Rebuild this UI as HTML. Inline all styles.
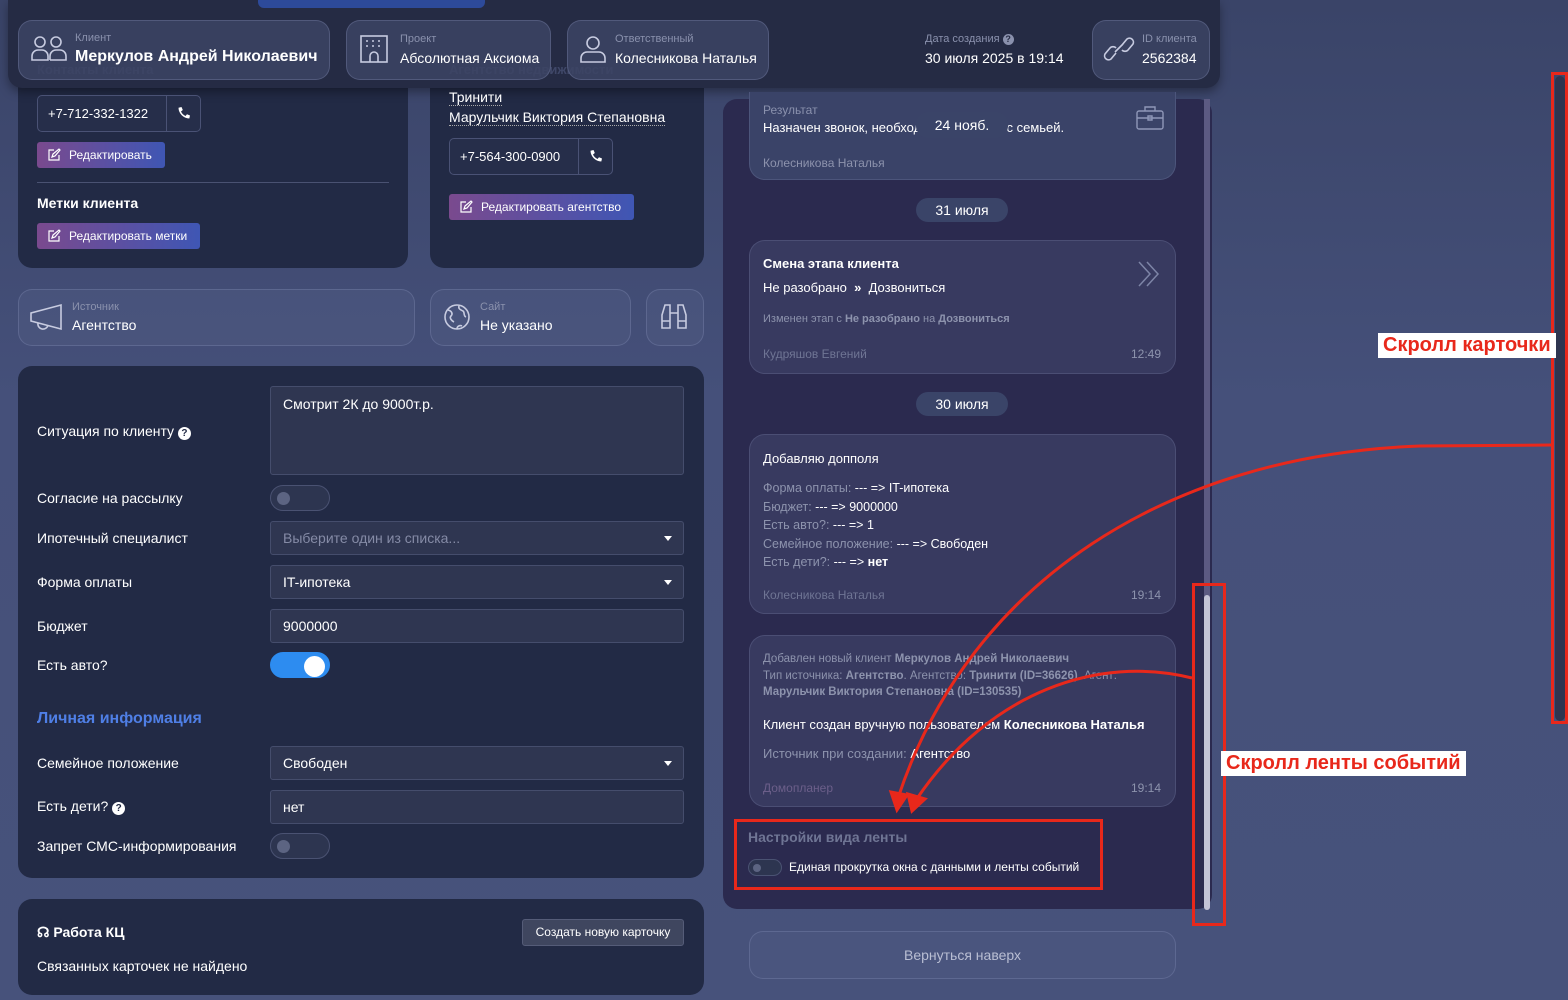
<!DOCTYPE html>
<html><head><meta charset="utf-8">
<style>
*{box-sizing:border-box;margin:0;padding:0}
body{width:1568px;height:1000px;overflow:hidden;position:relative;font-family:"Liberation Sans","Noto Sans CJK SC",sans-serif;color:#fff;background:linear-gradient(180deg,#3a4468 0%,#45507a 40%,#47527b 100%)}
.a{position:absolute}
.card{position:absolute;background:#222a45;border-radius:14px}
.chip{position:absolute;background:rgba(90,100,140,.28);border:1px solid rgba(140,150,190,.3);border-radius:14px}
.lbl{font-size:11px;color:#8a91ad}
.val{font-size:14px;color:#fff}
.btn{position:absolute;height:26px;border-radius:3px;background:linear-gradient(90deg,#7a4a8e,#3f56b4);font-size:12px;color:#fff;line-height:26px;padding-left:32px}
.btn svg{position:absolute;left:10px;top:6px}
.phone{position:absolute;height:37px;border:1px solid #4a5275;border-radius:5px;background:#262e4a;font-size:13px;line-height:35px;padding-left:10px}
.phone .ic{position:absolute;right:0;top:0;width:34px;height:35px;border-left:1px solid #4a5275}
.fl{position:absolute;left:37px;font-size:14px;color:#fff}
.inp{position:absolute;left:270px;width:414px;height:34px;background:#2f3651;border:1px solid #454d6c;border-radius:3px;font-size:14px;line-height:32px;padding-left:12px}
.caret{position:absolute;right:11px;top:14px;border-left:4px solid transparent;border-right:4px solid transparent;border-top:5px solid #fff}
.tog{position:absolute;left:270px;width:60px;height:26px;border-radius:13px;background:#2d3550;border:1px solid #4a5272}
.tog i{position:absolute;left:6px;top:6px;width:13px;height:13px;border-radius:50%;background:#5c6482}
.ev{position:absolute;left:749px;width:427px;background:rgba(80,88,130,.35);border:1px solid rgba(130,140,180,.25);border-radius:16px}
.date{position:absolute;left:916px;width:92px;height:24px;border-radius:12px;background:#3a4468;font-size:14px;text-align:center;line-height:24px}
.g{color:#8d93ad}
.red{position:absolute;border:3px solid #e8281b}
.rl{position:absolute;background:#fff;color:#e8281b;font-weight:bold;font-size:20px;padding:1px 5px}
</style></head><body>

<!-- left cards -->
<div class="card" style="left:18px;top:60px;width:390px;height:208px"></div>
<div class="card" style="left:430px;top:60px;width:274px;height:208px"></div>

<!-- header bar -->
<div class="a" style="left:8px;top:0;width:1212px;height:88px;background:#252b44;border-radius:0 0 14px 14px;box-shadow:0 4px 10px rgba(0,0,0,.35)"></div>
<div class="a" style="left:258px;top:0;width:227px;height:8px;background:#2d4a9a;border-radius:0 0 6px 6px"></div>
<div class="a" style="left:37px;top:62px;font-size:13px;font-weight:bold;color:#3f4768">Контакты клиента</div>
<div class="a" style="left:449px;top:62px;font-size:13px;font-weight:bold;color:#3f4768">Агентство недвижимости</div>

<!-- header chips -->
<div class="chip" style="left:18px;top:20px;width:312px;height:60px;background:rgba(60,68,100,.85)"></div>
<svg class="a" style="left:31px;top:35px" width="36" height="28" viewBox="0 0 36 28" fill="none" stroke="#c7cbe0" stroke-width="1.6"><circle cx="9" cy="7" r="5"/><circle cx="25" cy="7" r="5"/><path d="M1 25v-4a6 6 0 016-6h4a6 6 0 016 6v4zM19 25v-4a6 6 0 016-6h4a6 6 0 016 6v4H19"/></svg>
<div class="a lbl" style="left:75px;top:32px">Клиент</div>
<div class="a" style="left:75px;top:48px;font-size:16px;font-weight:bold">Меркулов Андрей Николаевич</div>

<div class="chip" style="left:346px;top:20px;width:205px;height:60px;background:rgba(60,68,100,.85)"></div>
<svg class="a" style="left:359px;top:34px" width="30" height="30" viewBox="0 0 30 30" fill="none" stroke="#c7cbe0" stroke-width="1.6"><rect x="2" y="2" width="26" height="26"/><path d="M7 7h2M13 7h2M19 7h2M7 12h2M13 12h2M19 12h2M11 28v-6a4 4 0 018 0v6"/></svg>
<div class="a lbl" style="left:400px;top:33px">Проект</div>
<div class="a val" style="left:400px;top:50px">Абсолютная Аксиома</div>

<div class="chip" style="left:567px;top:20px;width:202px;height:60px;background:rgba(60,68,100,.85)"></div>
<svg class="a" style="left:580px;top:34px" width="26" height="30" viewBox="0 0 26 30" fill="none" stroke="#c7cbe0" stroke-width="1.6"><circle cx="13" cy="9" r="6"/><path d="M1 28v-4a6 6 0 016-6h12a6 6 0 016 6v4z"/></svg>
<div class="a lbl" style="left:615px;top:33px">Ответственный</div>
<div class="a val" style="left:615px;top:50px">Колесникова Наталья</div>

<div class="a lbl" style="left:925px;top:33px">Дата создания <span style="display:inline-block;width:11px;height:11px;border-radius:50%;background:#8a91ad;color:#252b44;font-size:9px;text-align:center;line-height:11px;font-weight:bold">?</span></div>
<div class="a val" style="left:925px;top:50px">30 июля 2025 в 19:14</div>

<div class="chip" style="left:1092px;top:20px;width:118px;height:60px;background:rgba(60,68,100,.85)"></div>
<svg class="a" style="left:1103px;top:34px" width="32" height="30" viewBox="0 0 32 30" fill="none" stroke="#c7cbe0" stroke-width="1.6"><path d="M13 19l-5 6a4 4 0 01-6-5l5-6a4 4 0 016 0M19 11l5-6a4 4 0 016 5l-5 6a4 4 0 01-6 0M12 18l8-8"/></svg>
<div class="a lbl" style="left:1142px;top:33px">ID клиента</div>
<div class="a val" style="left:1142px;top:50px">2562384</div>

<!-- contacts -->
<div class="phone" style="left:37px;top:95px;width:164px">+7-712-332-1322<div class="ic"><svg style="position:absolute;left:10px;top:10px" width="14" height="14" viewBox="0 0 14 14"><path d="M13 9.5l-3-1.3-1.5 1.8A9 9 0 014 5.5l1.8-1.5L4.5 1 1.5 1.7A11 11 0 0012.3 12.5z" fill="#fff"/></svg></div></div>
<div class="btn" style="left:37px;top:142px;width:128px"><svg width="14" height="14" viewBox="0 0 14 14" fill="none" stroke="#fff" stroke-width="1.2"><path d="M7 2H2v10h10V7M5 9l1-3 6-5 1 1-5 6z"/></svg>Редактировать</div>
<div class="a" style="left:37px;top:182px;width:352px;height:1px;background:#4a5272"></div>
<div class="a" style="left:37px;top:195px;font-size:14px;font-weight:bold">Метки клиента</div>
<div class="btn" style="left:37px;top:223px;width:163px"><svg width="14" height="14" viewBox="0 0 14 14" fill="none" stroke="#fff" stroke-width="1.2"><path d="M7 2H2v10h10V7M5 9l1-3 6-5 1 1-5 6z"/></svg>Редактировать метки</div>

<div class="a val" style="left:449px;top:89px;border-bottom:1px dotted #aaa">Тринити</div>
<div class="a val" style="left:449px;top:109px;border-bottom:1px dotted #aaa">Марульчик Виктория Степановна</div>
<div class="phone" style="left:449px;top:138px;width:164px">+7-564-300-0900<div class="ic"><svg style="position:absolute;left:10px;top:10px" width="14" height="14" viewBox="0 0 14 14"><path d="M13 9.5l-3-1.3-1.5 1.8A9 9 0 014 5.5l1.8-1.5L4.5 1 1.5 1.7A11 11 0 0012.3 12.5z" fill="#fff"/></svg></div></div>
<div class="btn" style="left:449px;top:194px;width:185px"><svg width="14" height="14" viewBox="0 0 14 14" fill="none" stroke="#fff" stroke-width="1.2"><path d="M7 2H2v10h10V7M5 9l1-3 6-5 1 1-5 6z"/></svg>Редактировать агентство</div>

<!-- source chips -->
<div class="chip" style="left:18px;top:289px;width:397px;height:57px"></div>
<svg class="a" style="left:29px;top:302px" width="36" height="30" viewBox="0 0 36 30" fill="none" stroke="#c7cbe0" stroke-width="1.6"><path d="M2 11v8l30 8V3zM9 21a5 5 0 0010 2"/></svg>
<div class="a lbl" style="left:72px;top:301px">Источник</div>
<div class="a val" style="left:72px;top:317px">Агентство</div>
<div class="chip" style="left:430px;top:289px;width:201px;height:57px"></div>
<svg class="a" style="left:443px;top:303px" width="28" height="28" viewBox="0 0 28 28" fill="none" stroke="#c7cbe0" stroke-width="1.6"><circle cx="14" cy="14" r="12"/><path d="M5 7c4 1 5 4 3 6s1 5 3 6M16 3c-1 3 2 4 4 5s0 5 3 6M14 26c0-3 3-4 5-3"/></svg>
<div class="a lbl" style="left:480px;top:301px">Сайт</div>
<div class="a val" style="left:480px;top:317px">Не указано</div>
<div class="chip" style="left:646px;top:289px;width:58px;height:57px"></div>
<svg class="a" style="left:659px;top:303px" width="30" height="28" viewBox="0 0 30 28" fill="none" stroke="#c7cbe0" stroke-width="1.6"><path d="M3 25V12l3-10h5v23zM27 25V12l-3-10h-5v23zM11 10h8M3 18h8M19 18h8"/></svg>

<!-- form card -->
<div class="card" style="left:18px;top:366px;width:686px;height:512px"></div>
<div class="a" style="left:270px;top:386px;width:414px;height:89px;background:#2f3651;border:1px solid #454d6c;border-radius:3px;font-size:14px;padding:9px 12px">Смотрит 2К до 9000т.р.</div>
<div class="fl" style="top:423px">Ситуация по клиенту <span style="display:inline-block;width:13px;height:13px;border-radius:50%;background:#fff;color:#222a45;font-size:10px;text-align:center;line-height:13px;font-weight:bold">?</span></div>
<div class="fl" style="top:490px">Согласие на рассылку</div>
<div class="tog" style="top:485px"><i></i></div>
<div class="fl" style="top:530px">Ипотечный специалист</div>
<div class="inp" style="top:521px;color:#858ba6">Выберите один из списка...<span class="caret"></span></div>
<div class="fl" style="top:574px">Форма оплаты</div>
<div class="inp" style="top:565px">IT-ипотека<span class="caret"></span></div>
<div class="fl" style="top:618px">Бюджет</div>
<div class="inp" style="top:609px">9000000</div>
<div class="fl" style="top:657px">Есть авто?</div>
<div class="tog" style="top:652px;background:#2d8cf0;border-color:#2d8cf0"><i style="left:33px;top:3px;width:21px;height:21px;background:#fff"></i></div>
<div class="fl" style="top:710px;font-size:16px;font-weight:bold;color:#4f7fe6">Личная информация</div>
<div class="fl" style="top:755px">Семейное положение</div>
<div class="inp" style="top:746px">Свободен<span class="caret"></span></div>
<div class="fl" style="top:798px">Есть дети? <span style="display:inline-block;width:13px;height:13px;border-radius:50%;background:#fff;color:#222a45;font-size:10px;text-align:center;line-height:13px;font-weight:bold">?</span></div>
<div class="inp" style="top:790px">нет</div>
<div class="fl" style="top:838px">Запрет СМС-информирования</div>
<div class="tog" style="top:833px"><i></i></div>

<!-- KC card -->
<div class="card" style="left:18px;top:899px;width:686px;height:96px"></div>
<div class="fl" style="top:924px;font-weight:bold">☊ Работа КЦ</div>
<div class="a" style="left:522px;top:919px;width:162px;height:27px;background:#3f465f;border:1px solid #555c78;border-radius:3px;font-size:12px;text-align:center;line-height:25px">Создать новую карточку</div>
<div class="fl" style="top:958px">Связанных карточек не найдено</div>

<!-- feed panel -->
<div class="a" style="left:723px;top:99px;width:489px;height:810px;background:#2b2a4f;border-radius:14px"></div>
<div class="a" style="left:1204px;top:99px;width:6px;height:810px;background:#5c5a82"></div>
<div class="a" style="left:1204px;top:595px;width:6px;height:315px;background:#c3c3d6;border-radius:3px"></div>

<div class="ev" style="top:92px;height:88px;border-top:none;border-radius:0 0 16px 16px;background:#3a4368"></div>
<div class="a lbl" style="left:763px;top:103px;font-size:12px">Результат</div>
<div class="a" style="left:763px;top:120px;font-size:13px">Назначен звонок, необходимо обсудить с семьей.</div>
<div class="date" style="top:112px;height:26px;line-height:26px;background:#3a4468">24 нояб.</div>
<div class="a g" style="left:763px;top:156px;font-size:12px">Колесникова Наталья</div>
<svg class="a" style="left:1135px;top:105px" width="30" height="26" viewBox="0 0 30 26" fill="none" stroke="#8f97b8" stroke-width="1.4"><rect x="2" y="6" width="26" height="18" rx="2"/><path d="M10 6V2h10v4M2 13h26M13 11h4v4h-4z"/></svg>

<div class="date" style="top:198px">31 июля</div>
<div class="ev" style="top:240px;height:134px"></div>
<div class="a" style="left:763px;top:256px;font-size:13px;font-weight:bold">Смена этапа клиента</div>
<div class="a" style="left:763px;top:280px;font-size:13px">Не разобрано &nbsp;<b>»</b>&nbsp; Дозвониться</div>
<div class="a g" style="left:763px;top:313px;font-size:11px">Изменен этап с <b>Не разобрано</b> на <b>Дозвониться</b></div>
<div class="a g" style="left:763px;top:347px;font-size:12px;color:#6f7594">Кудряшов Евгений</div>
<div class="a g" style="left:1131px;top:347px;font-size:12px">12:49</div>
<svg class="a" style="left:1136px;top:260px" width="26" height="28" viewBox="0 0 26 28" fill="none" stroke="#7d84a6" stroke-width="1.5"><path d="M3 2l11 12L3 26M11 2l11 12-11 12"/></svg>

<div class="date" style="top:392px">30 июля</div>
<div class="ev" style="top:434px;height:180px"></div>
<div class="a" style="left:763px;top:451px;font-size:13px">Добавляю допполя</div>
<div class="a" style="left:763px;top:479px;font-size:12.5px;line-height:18.5px"><span class="g">Форма оплаты:</span> --- =&gt; IT-ипотека<br><span class="g">Бюджет:</span> --- =&gt; 9000000<br><span class="g">Есть авто?:</span> --- =&gt; 1<br><span class="g">Семейное положение:</span> --- =&gt; Свободен<br><span class="g">Есть дети?:</span> --- =&gt; <b>нет</b></div>
<div class="a" style="left:763px;top:588px;font-size:12px;color:#6f7594">Колесникова Наталья</div>
<div class="a g" style="left:1131px;top:588px;font-size:12px">19:14</div>

<div class="ev" style="top:635px;height:172px"></div>
<div class="a g" style="left:763px;top:651px;font-size:11.5px;line-height:16.5px">Добавлен новый клиент <b>Меркулов Андрей Николаевич</b><br>Тип источника: <b>Агентство</b>. Агентство: <b>Тринити (ID=36626)</b>. Агент:<br><b>Марульчик Виктория Степановна (ID=130535)</b></div>
<div class="a" style="left:763px;top:717px;font-size:13px">Клиент создан вручную пользователем <b>Колесникова Наталья</b></div>
<div class="a g" style="left:763px;top:746px;font-size:13px">Источник при создании: <span style="color:#fff">Агентство</span></div>
<div class="a" style="left:763px;top:781px;font-size:12px;color:#6c5f8a">Домопланер</div>
<div class="a g" style="left:1131px;top:781px;font-size:12px">19:14</div>

<div class="a" style="left:748px;top:829px;font-size:14px;font-weight:bold;color:#6f7594">Настройки вида ленты</div>
<div class="a" style="left:748px;top:859px;width:34px;height:17px;border-radius:9px;background:#2d3550;border:1px solid #4a5272"><i style="position:absolute;left:4px;top:4px;width:8px;height:8px;border-radius:50%;background:#5c6482"></i></div>
<div class="a" style="left:789px;top:860px;font-size:12px">Единая прокрутка окна с данными и ленты событий</div>

<div class="a" style="left:749px;top:931px;width:427px;height:48px;border:1px solid rgba(140,150,190,.3);background:rgba(90,100,140,.2);border-radius:14px;text-align:center;line-height:46px;font-size:14px;color:#b9bed3">Вернуться наверх</div>

<!-- page scrollbar -->
<div class="a" style="left:1555px;top:76px;width:10px;height:645px;background:#2e3550;border-radius:5px"></div>

<!-- annotations -->
<div class="red" style="left:1551px;top:72px;width:17px;height:652px"></div>
<div class="red" style="left:1192px;top:583px;width:34px;height:343px"></div>
<div class="red" style="left:734px;top:819px;width:369px;height:71px"></div>
<div class="rl" style="left:1378px;top:333px">Скролл карточки</div>
<div class="rl" style="left:1221px;top:751px">Скролл ленты событий</div>
<svg class="a" style="left:0;top:0" width="1568" height="1000" fill="none" stroke="#e8281b" stroke-width="3">
<path d="M1552 445 L1420 446 C1170 455 970 580 898 798"/>
<path d="M1192 678 C1100 655 990 690 916 800"/>
<path d="M891 792 L897 810 L907 795 Z" fill="#e8281b"/>
<path d="M908 794 L912 811 L925 799 Z" fill="#e8281b"/>
</svg>
</body></html>
